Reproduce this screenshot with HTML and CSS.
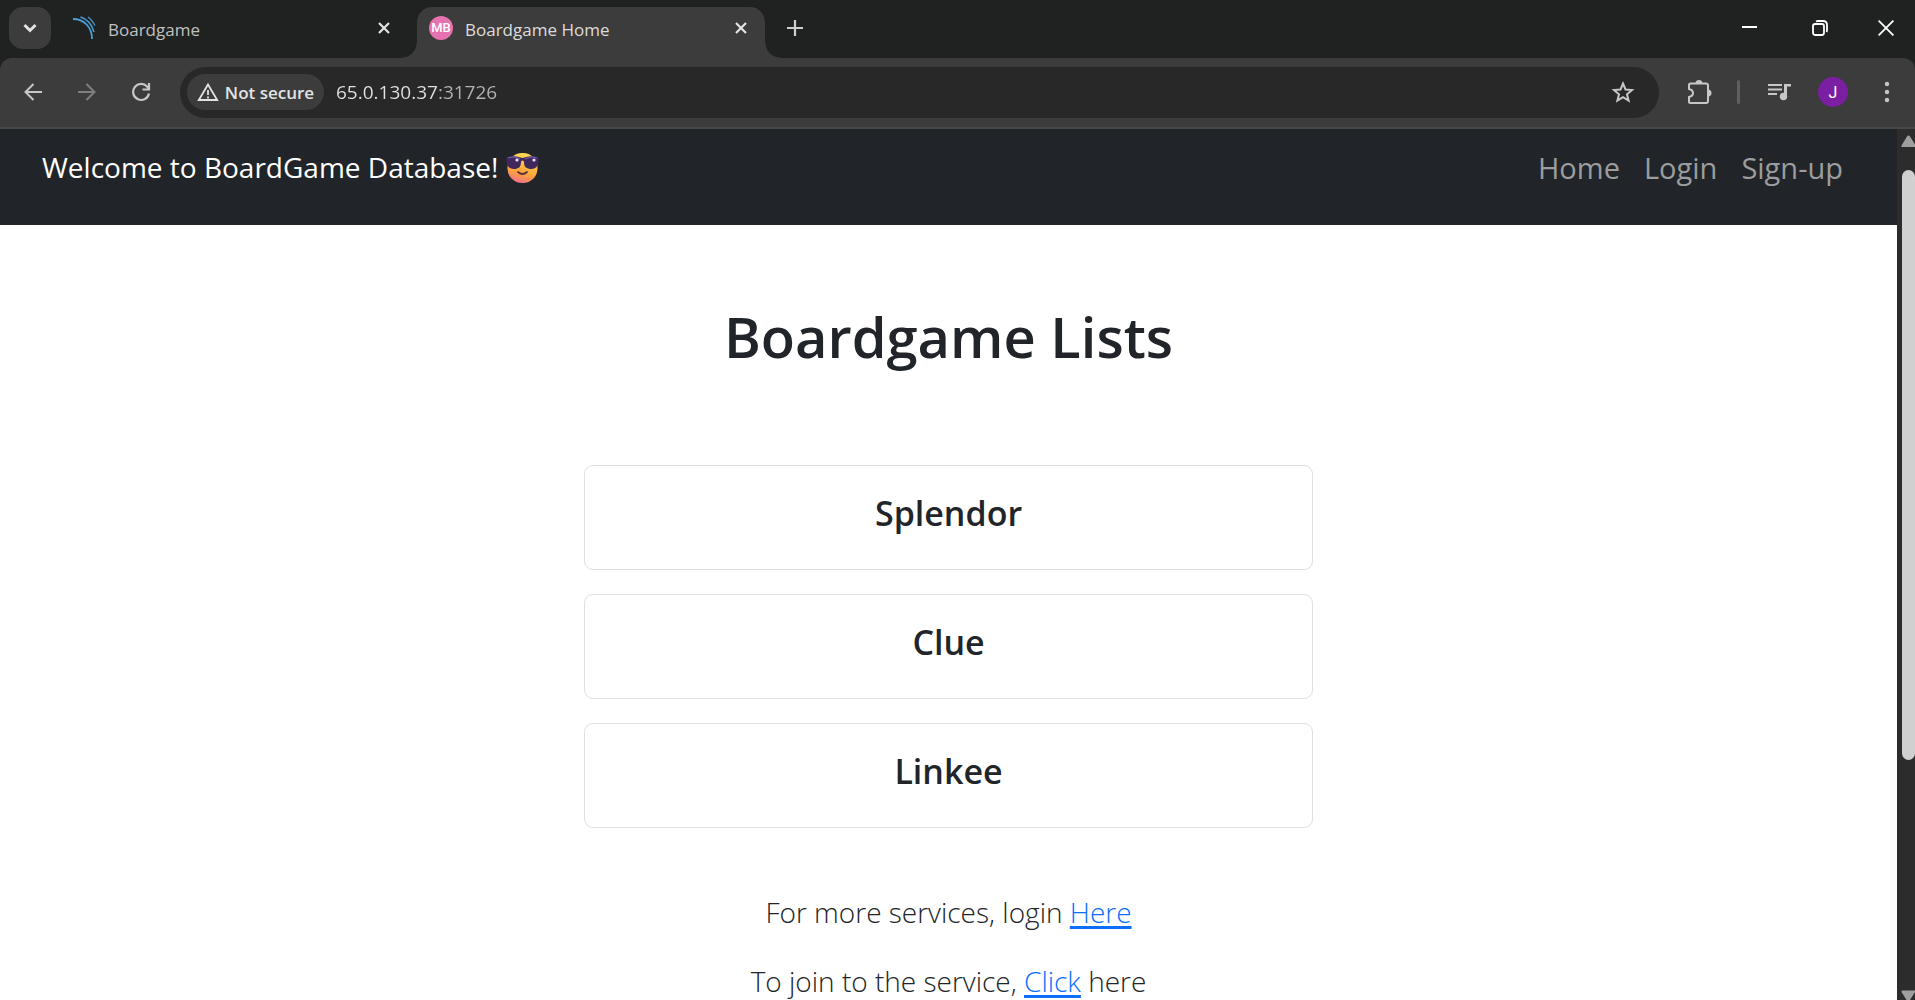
FILE: index.html
```html
<!DOCTYPE html>
<html lang="en">
<head>
<meta charset="utf-8">
<title>Boardgame Home</title>
<link rel="stylesheet" href="styles.css">
</head>
<body>
<header class="browser">
  <div class="tabstrip">
    <button class="tab-search" aria-label="Search tabs">
      <svg width="16" height="16" viewBox="0 0 16 16" fill="none" stroke="#e3e3e3" stroke-width="3"><path d="M2.500 5 8 10.500 13.500 5"/></svg>
    </button>
    <div class="tab">
      <svg width="24" height="24" viewBox="0 0 24 24" fill="none" stroke="#4b9fd5"><path stroke-width="1.800" d="M1 3C12 3 20 11 20 23"/><path stroke-width="1.500" d="M8.500 1C15 3 20 9 22 16"/><path stroke-width="1.200" d="M16 1c3 2 5 5 7 8.500"/></svg>
      <span class="tab-title">Boardgame</span>
      <button class="tab-close" aria-label="Close tab"><svg width="12" height="12" viewBox="0 0 12 12" stroke="#e3e3e3" stroke-width="2.200"><path d="m1 1 10 10M11 1 1 11"/></svg></button>
    </div>
    <div class="tab tab-active">
      <span class="favicon">MB</span>
      <span class="tab-title">Boardgame Home</span>
      <button class="tab-close" aria-label="Close tab"><svg width="12" height="12" viewBox="0 0 12 12" stroke="#e3e3e3" stroke-width="2.200"><path d="m1 1 10 10M11 1 1 11"/></svg></button>
    </div>
    <button class="new-tab" aria-label="New tab"><svg width="16" height="16" viewBox="0 0 16 16" stroke="#d0d0d0" stroke-width="2.200"><path d="M8 0v16M0 8h16"/></svg></button>
    <div class="window-controls">
      <button aria-label="Minimize"><svg width="16" height="16" viewBox="0 0 16 16" stroke="#fff" stroke-width="2"><path d="M0 7h15"/></svg></button>
      <button aria-label="Restore"><svg width="16" height="16" viewBox="0 0 16 16" fill="none" stroke="#fff" stroke-width="1.800"><rect x="1" y="4" width="11" height="11" rx="2.200"/><path d="M4 1.500Q5 1 6 1h5q4 0 4 4v5q0 1-.5 2"/></svg></button>
      <button aria-label="Close"><svg width="16" height="16" viewBox="0 0 16 16" stroke="#fff" stroke-width="1.800"><path d="m.6.600 14.800 14.800M15.400.600.600 15.400"/></svg></button>
    </div>
  </div>
  <div class="toolbar">
    <button class="tool" aria-label="Back"><svg width="18" height="18" viewBox="0 0 18 18" fill="none" stroke="#c7c7c7" stroke-width="2"><path d="M18 9H1.500M9.500 1l-8 8 8 8"/></svg></button>
    <button class="tool" aria-label="Forward"><svg width="18" height="18" viewBox="0 0 18 18" fill="none" stroke="#7f7f7f" stroke-width="2"><path d="M0 9h16.500M8.500 1l8 8-8 8"/></svg></button>
    <button class="tool" aria-label="Reload"><svg width="20" height="20" viewBox="0 0 20 20" fill="none" stroke="#c7c7c7" stroke-width="2.200"><path d="M18 11.500A8 8 0 1 1 16 4.500l2 2.500"/><path d="M18 1v6.500h-6.500"/></svg></button>
    <div class="omnibox">
      <button class="security">
        <svg width="22" height="20" viewBox="0 0 22 20" fill="none" stroke="#e3e3e3" stroke-width="1.800"><path d="M11 2.500 1.800 18h18.400z"/><path d="M11 8v5M11 14.500v2"/></svg>
        Not secure
      </button>
      <input class="address" type="text" aria-label="Address" value="65.0.130.37:31726">
      <button class="bookmark" aria-label="Bookmark"><svg width="24" height="24" viewBox="0 0 24 24" fill="none" stroke="#c7c7c7" stroke-width="2"><path d="m12 3.500 2.500 6 6.500.5-5 4.300 1.600 6.400L12 17.200l-5.600 3.500L8 14.300 3 10l6.500-.5z"/></svg></button>
    </div>
    <button class="tool extensions" aria-label="Extensions"><svg width="26" height="26" viewBox="0 0 26 26" fill="none" stroke="#c7c7c7" stroke-width="2"><path d="M3.500 4.500H19q2 0 2 2V22q0 2-2 2H3.500q-1.500 0-1.500-1.500V18q4-1 4-4t-4-4V6q0-1.500 1.500-1.500z"/><path fill="#c7c7c7" stroke="none" d="M8.500 4.500a3.500 3.500 0 0 1 7 0zM21 10.500a3.500 3.500 0 0 1 0 7z"/></svg></button>
    <span class="divider"></span>
    <button class="tool media" aria-label="Media control"><svg width="24" height="20" viewBox="0 0 24 20" fill="#c7c7c7"><path d="M1 2h14v2H1zM1 6.500h14v2H1zM1 11h9v2H1zM17 2h7v2.500h-4V14h-3z"/><circle cx="16.500" cy="14.500" r="3.700"/></svg></button>
    <button class="profile" aria-label="Profile">J</button>
    <button class="tool menu" aria-label="Menu"><svg width="6" height="22" viewBox="0 0 6 22" fill="#c7c7c7"><circle cx="3" cy="3" r="2.200"/><circle cx="3" cy="11" r="2.200"/><circle cx="3" cy="19" r="2.200"/></svg></button>
  </div>
</header>
<div class="viewport">
  <div class="page">
    <nav class="navbar">
      <a class="brand" href="#">Welcome to BoardGame Database!
        <svg width="33" height="32" viewBox="0 0 33 32" role="img" aria-label="Smiling face with sunglasses"><defs><linearGradient id="face" x1=".6" y1="0" x2=".3" y2="1"><stop offset="0" stop-color="#ffdc58"/><stop offset=".65" stop-color="#ffa43c"/><stop offset="1" stop-color="#ef6d8d"/></linearGradient></defs><rect x="1.500" y="1" width="30" height="30" rx="14.500" fill="url(#face)"/><path d="M.5 6q0-1.500 2-1.500Q9 3.500 14.500 5.500q2 .8 4 0Q24 3.500 30.500 4.500q2 0 2 1.500v3c0 5-3 8-7 8-5 0-7.500-2-7.500-7q0-1.500-1.500-1.500T15 10c0 5-2.500 7-7 7C3.500 17 .5 14 .5 9z" fill="#40285c"/><path d="M2 6q6-2 12 1M19 7q6-3 12-1" stroke="#6c5aa0" stroke-width="1.200" fill="none"/><circle cx="11" cy="8" r="1.600" fill="#e8e0ff"/><circle cx="28" cy="8" r="1.600" fill="#e8e0ff"/><path d="M12 20q4.500 4 9 0" fill="none" stroke="#5a3040" stroke-width="1.800" stroke-linecap="round"/></svg>
      </a>
      <div class="links"><a href="#">Home</a><a href="#">Login</a><a href="#">Sign-up</a></div>
    </nav>
    <main class="content">
      <h1>Boardgame Lists</h1>
      <div class="games">
        <h2 class="card">Splendor</h2>
        <h2 class="card">Clue</h2>
        <h2 class="card">Linkee</h2>
      </div>
      <p>For more services, login <a href="#">Here</a></p>
      <p>To join to the service, <a href="#">Click</a> here</p>
    </main>
  </div>
  <div class="scrollbar" aria-hidden="true">
    <svg width="18" height="12" viewBox="0 0 18 12" fill="#9f9f9f"><path d="M4.500 10.500 10 1.500q1.500-2 3 0L18 9.500V12H5.500q-1.500 0-1-1.500z"/></svg>
    <div class="track"><div class="thumb"></div></div>
    <svg width="18" height="10" viewBox="0 0 18 10" fill="#9f9f9f"><path d="M4.500 2q-.5-1.500 1-1.500H18V2l-5 8h-3.500z"/></svg>
  </div>
</div>
</body>
</html>
```
FILE: styles.css
```css
* { box-sizing: border-box; }

body {
  margin: 0;
  height: 100vh;
  display: flex;
  flex-direction: column;
  overflow: hidden;
  background: #202221;
  font-family: "Open Sans", "Noto Sans", sans-serif;
}

button {
  display: flex;
  align-items: center;
  justify-content: center;
  padding: 0;
  border: 0;
  background: none;
  color: #e3e3e3;
  font-family: inherit;
}

svg { display: block; flex: none; }

.browser { flex: none; }

.tabstrip {
  display: flex;
  height: 58px;
  padding: 7px 0 0 9px;
}

.tab-search {
  width: 42px;
  height: 42px;
  border-radius: 14px;
  background: #3c3c3c;
}

.tab {
  position: relative;
  display: flex;
  align-items: center;
  gap: 12px;
  width: 348px;
  padding: 0 18px 9px 12px;
  color: #c0c0c0;
  font-size: 17px;
}

.tab:not(.tab-active) {
  width: 357px;
  margin-left: 9px;
  padding-right: 27px;
}

.tab-active {
  border-radius: 15px 15px 0 0;
  background: #3c3c3c;
  color: #dcdcdc;
}

.tab-active::before,
.tab-active::after {
  content: "";
  position: absolute;
  bottom: 0;
  width: 15px;
  height: 15px;
}

.tab-active::before {
  right: 100%;
  background: radial-gradient(circle at 0 0, transparent 14px, #3c3c3c 15px);
}

.tab-active::after {
  left: 100%;
  background: radial-gradient(circle at 100% 0, transparent 14px, #3c3c3c 15px);
}

.tab-title {
  flex: 1;
  padding-top: 2px;
}

.favicon {
  width: 24px;
  border-radius: 50%;
  background: #e672b0;
  color: #fff;
  font: 500 13px/24px Roboto, sans-serif;
  text-align: center;
}

.new-tab {
  width: 60px;
  height: 42px;
}

.window-controls {
  display: flex;
  flex: 1;
  justify-content: flex-end;
  height: 41px;
}

.window-controls button { width: 69px; }
.window-controls button:last-child { width: 60px; padding-left: 2px; }

.window-controls button:first-child,
.window-controls button:nth-child(2) { width: 70px; }

.toolbar {
  display: flex;
  align-items: center;
  height: 71px;
  padding: 0 1px 1px 6px;
  border-bottom: 2px solid #484848;
  border-radius: 12px 12px 0 0;
  background: #3c3c3c;
}

.tool {
  width: 54px;
  height: 51px;
}

.omnibox {
  display: flex;
  flex: 1;
  align-items: center;
  gap: 12px;
  height: 51px;
  margin-left: 12px;
  padding: 0 24px 0 7px;
  border-radius: 26px;
  background: #282828;
}

.security {
  gap: 6px;
  width: 137px;
  height: 36px;
  border-radius: 18px;
  background: #3c3c3c;
  font-size: 17px;
  font-weight: 600;
}

.address {
  flex: 1;
  padding: 0;
  border: 0;
  background: linear-gradient(to right, #e3e3e3 103px, #b4b4b4 103px);
  background-clip: text;
  color: transparent;
  font: 19px/27px "Open Sans", sans-serif;
}

.extensions { margin-left: 14px; }

.divider {
  width: 3px;
  height: 24px;
  margin-left: 10px;
  border-radius: 2px;
  background: #5f5f5f;
}

.media { margin-left: 12px; }

.profile {
  width: 30px;
  height: 30px;
  margin-left: 12px;
  border-radius: 50%;
  background: #7b1fa2;
  color: #fff;
  font: 16px Roboto, sans-serif;
}

.menu { margin-left: 12px; }

.viewport {
  display: flex;
  flex: 1;
  min-height: 0;
}

.page {
  flex: 1;
  overflow: hidden;
  background: #fff;
  color: #212529;
}

.navbar {
  display: flex;
  justify-content: space-between;
  height: 96px;
  padding: 16px 54px 0 42px;
  background: #212529;
  font-size: 28px;
  line-height: 45px;
}

.navbar a { text-decoration: none; }

.brand {
  display: flex;
  align-items: center;
  gap: 8px;
  color: #fff;
}

.brand, .links { height: 45px; }

.links {
  display: flex;
  gap: 24px;
  font-size: 29px;
}

.links a { color: #9b9d9e; }

.content {
  padding: 75px 24px 0;
  text-align: center;
}

h1 {
  margin: 0 0 93px;
  font-size: 56px;
  font-weight: 600;
  line-height: 72px;
}

.games {
  display: flex;
  flex-direction: column;
  gap: 24px;
  max-width: 729px;
  margin: 0 auto 62px;
}

.card {
  height: 105px;
  margin: 0;
  padding: 26px 0;
  border: 1px solid #dee0e2;
  border-radius: 9px;
  font-size: 34px;
  font-weight: 600;
  line-height: 43px;
}

p {
  margin: 0 0 24px;
  font-size: 28px;
  font-weight: 300;
  line-height: 45px;
}

p a {
  color: #0d6efd;
  text-decoration-thickness: 3px;
  text-underline-offset: 3px;
}

.scrollbar {
  display: flex;
  flex-direction: column;
  width: 18px;
  padding-top: 6px;
  background: #2c2c2c;
}

.track {
  flex: 1;
  padding: 23px 0 0 5px;
}

.thumb {
  height: 72%;
  border-radius: 7px;
  background: #d0d0d0;
}
```
